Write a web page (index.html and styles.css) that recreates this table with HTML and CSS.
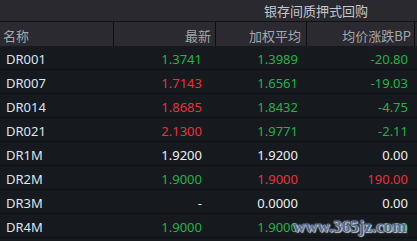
FILE: index.html
```html
<!DOCTYPE html>
<html>
<head>
<meta charset="utf-8">
<link rel="stylesheet" href="styles.css">
</head>
<body>
<div class="board">
  <div class="top">
    <div class="top-spacer"></div>
    <div class="top-title">银存间质押式回购</div>
  </div>
  <div class="row head">
    <div class="c c1">名称</div>
    <div class="c c2">最新</div>
    <div class="c c3">加权平均</div>
    <div class="c c4">均价涨跌BP</div>
    <div class="c c5"></div>
  </div>
  <div class="row">
    <div class="c c1 name">DR001</div>
    <div class="c c2 up">1.3741</div>
    <div class="c c3 up">1.3989</div>
    <div class="c c4 up">-20.80</div>
    <div class="c c5"></div>
  </div>
  <div class="row">
    <div class="c c1 name">DR007</div>
    <div class="c c2 dn">1.7143</div>
    <div class="c c3 up">1.6561</div>
    <div class="c c4 up">-19.03</div>
    <div class="c c5"></div>
  </div>
  <div class="row">
    <div class="c c1 name">DR014</div>
    <div class="c c2 dn">1.8685</div>
    <div class="c c3 up">1.8432</div>
    <div class="c c4 up">-4.75</div>
    <div class="c c5"></div>
  </div>
  <div class="row">
    <div class="c c1 name">DR021</div>
    <div class="c c2 dn">2.1300</div>
    <div class="c c3 up">1.9771</div>
    <div class="c c4 up">-2.11</div>
    <div class="c c5"></div>
  </div>
  <div class="row">
    <div class="c c1 name">DR1M</div>
    <div class="c c2 eq">1.9200</div>
    <div class="c c3 eq">1.9200</div>
    <div class="c c4 eq">0.00</div>
    <div class="c c5"></div>
  </div>
  <div class="row">
    <div class="c c1 name">DR2M</div>
    <div class="c c2 up">1.9000</div>
    <div class="c c3 dn">1.9000</div>
    <div class="c c4 dn">190.00</div>
    <div class="c c5"></div>
  </div>
  <div class="row">
    <div class="c c1 name">DR3M</div>
    <div class="c c2 eq">-</div>
    <div class="c c3 eq">0.0000</div>
    <div class="c c4 eq">0.00</div>
    <div class="c c5"></div>
  </div>
  <div class="row">
    <div class="c c1 name">DR4M</div>
    <div class="c c2 up">1.9000</div>
    <div class="c c3 up">1.9000</div>
    <div class="c c4 up">0.00</div>
    <div class="c c5"></div>
  </div>
  <div class="row">
    <div class="c c1 name"></div>
    <div class="c c2"></div>
    <div class="c c3"></div>
    <div class="c c4"></div>
    <div class="c c5"></div>
  </div>
  <div class="watermark">www.365jz.com</div>
</div>
</body>
</html>
```
FILE: styles.css
```css
html, body {
  margin: 0;
  padding: 0;
  background: #16191e;
  overflow: hidden;
}
.board {
  position: relative;
  width: 417px;
  height: 241px;
  overflow: hidden;
  font-family: "Noto Sans", "Noto Sans CJK SC", sans-serif;
  font-size: 13px;
  background: #16191e;
}
.top {
  display: grid;
  grid-template-columns: 215px 202px;
  height: 21px;
  background: #29292f;
  border-bottom: 1px solid #101215;
}
.top-title {
  color: #c4c7cb;
  text-align: center;
  line-height: 21px;
  font-family: "Noto Sans CJK SC", sans-serif;
}
.row {
  display: grid;
  grid-template-columns: 113px 102px 91px 108px 3px;
  height: 23px;
  border-bottom: 1px solid #0f1114;
  white-space: nowrap;
}
.row.head {
  height: 24px;
  border-bottom: none;
  background: #2a2a30;
  color: #a3a7ab;
  font-family: "Noto Sans CJK SC", sans-serif;
}
.c {
  text-align: right;
  overflow: hidden;
  padding-top: 4px;
  line-height: 19px;
}
.head .c {
  padding-top: 3px;
  line-height: 21px;
}
.c1 {
  text-align: left;
  padding-left: 6px;
}
.head .c1 { padding-left: 3px; }
.c2 { padding-right: 13px; }
.c3 { padding-right: 8px; }
.c4 { padding-right: 6px; }
.head .c2 { padding-right: 4px; border-left: 1px solid #0c0d10; }
.head .c3 { padding-right: 5px; border-left: 1px solid #0c0d10; }
.head .c4 { padding-right: 3px; border-left: 1px solid #0c0d10; }
.head .c5 { border-left: 1px solid #0c0d10; }
.name { color: #dbe6f2; }
.up { color: #22b24c; }
.dn { color: #e8323b; }
.eq { color: #eef0f2; }
.watermark {
  position: absolute;
  left: 293px;
  top: 217px;
  font-family: "Liberation Serif", serif;
  font-weight: bold;
  font-size: 17px;
  color: #4f6a8c;
  text-shadow: 0 0 2px #d8dde4, 0 0 1px #d8dde4, 1px 1px 1px #c0c8d2;
}
```
